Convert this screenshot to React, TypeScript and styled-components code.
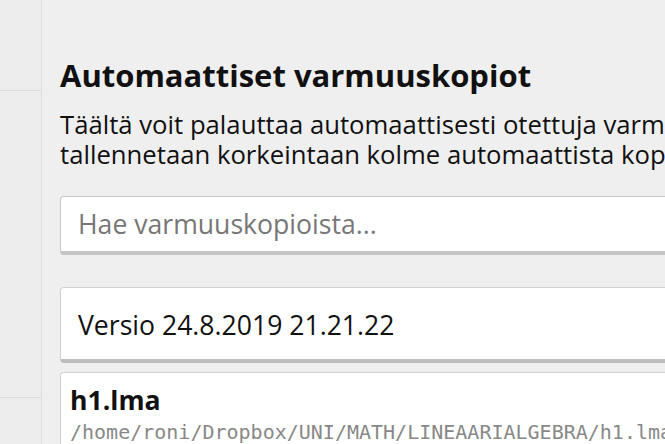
import React from "react";
import styled, { createGlobalStyle } from "styled-components";

const Global = createGlobalStyle`
  html, body { margin: 0; padding: 0; background: #efefef; }
  body { font-family: "Open Sans", "Noto Sans", sans-serif; color: #111; }
  * { box-sizing: border-box; }
`;

const Page = styled.div`
  display: flex;
  width: 665px;
  height: 444px;
  overflow: hidden;
  background: #efefef;
`;

const Sidebar = styled.nav`
  flex: 0 0 42px;
  display: flex;
  flex-direction: column;
  border-right: 1px solid #dedede;
  background: #ededed;
`;

const SideItem = styled.div<{ $h: number }>`
  flex: 0 0 ${(p) => p.$h}px;
  border-bottom: 1px solid #dcdcdc;
`;

const Main = styled.main`
  flex: 1 0 auto;
  width: 960px;
  padding: 55px 0 0 18px;
  display: flex;
  flex-direction: column;
  & > * { flex-shrink: 0; }
`;

const Title = styled.h2`
  margin: 0;
  font-size: 31px;
  font-weight: 700;
  line-height: 40px;
  color: #111;
`;

const Lead = styled.p`
  margin: 15px 0 0;
  font-size: 25.7px;
  line-height: 30px;
  color: #111;
  white-space: nowrap;
`;

const Search = styled.input`
  margin-top: 26px;
  width: 900px;
  height: 59px;
  padding: 0 17px;
  font-family: "Open Sans", "Noto Sans", sans-serif;
  font-size: 26.6px;
  color: #222;
  background: #fff;
  border: 1px solid #c9c9c9;
  border-bottom: 4px solid #c4c4c4;
  border-radius: 4px;
  outline: none;
  &::placeholder { color: #777; }
`;

const List = styled.div`
  margin-top: 32px;
  display: flex;
  flex-direction: column;
  gap: 9px;
  width: 900px;
  & > * { flex-shrink: 0; }
`;

const Card = styled.div<{ $pad: string }>`
  background: #fff;
  border: 1px solid #d0d0d0;
  border-bottom: 4px solid #bdbdbd;
  border-radius: 4px;
  padding: ${(p) => p.$pad};
  display: flex;
  flex-direction: column;
`;

const VersionText = styled.div`
  font-size: 26.6px;
  line-height: 36px;
  height: 71px;
  padding-top: 2px;
  display: flex;
  align-items: center;
`;

const FileName = styled.div`
  font-size: 26.6px;
  font-weight: 700;
  line-height: 34px;
`;

const FilePath = styled.div`
  margin-top: 4px;
  font-family: "DejaVu Sans Mono", monospace;
  font-size: 20px;
  line-height: 22px;
  color: #888;
`;

export default function App() {
  return (
    <>
      <Global />
      <Page>
        <Sidebar>
          <SideItem $h={91} />
          <SideItem $h={307} />
        </Sidebar>
        <Main>
          <Title>Automaattiset varmuuskopiot</Title>
          <Lead>
            Täältä voit palauttaa automaattisesti otettuja varmuuskopioita. Ohjelma
            <br />
            tallennetaan korkeintaan kolme automaattista kopiota jokaisesta tiedostosta.
          </Lead>
          <Search placeholder="Hae varmuuskopioista..." />
          <List>
            <Card $pad="0 17px">
              <VersionText>Versio 24.8.2019 21.21.22</VersionText>
            </Card>
            <Card $pad="10px 9px">
              <FileName>h1.lma</FileName>
              <FilePath>/home/roni/Dropbox/UNI/MATH/LINEAARIALGEBRA/h1.lma</FilePath>
            </Card>
          </List>
        </Main>
      </Page>
    </>
  );
}
